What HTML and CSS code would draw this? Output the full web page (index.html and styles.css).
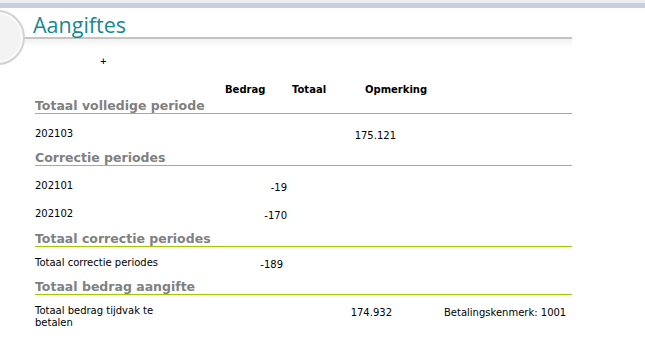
FILE: index.html
```
<!DOCTYPE html>
<html lang="nl">
<head>
<meta charset="utf-8">
<title>Aangiftes</title>
<link rel="stylesheet" href="styles.css">
</head>
<body>
<div class="topbar"></div>
<header class="masthead">
  <div class="orb"></div>
  <h1 class="title">Aangiftes</h1>
  <div class="title-shadow"></div>
</header>
<main class="report">
  <div class="mark">+</div>
  <div class="colheads"><span></span><span>Bedrag</span><span>Totaal</span><span>Opmerking</span></div>

  <section class="group">
    <h2>Totaal volledige periode</h2>
    <div class="row row-total"><span>202103</span><span class="num">175.121</span></div>
  </section>

  <section class="group">
    <h2>Correctie periodes</h2>
    <div class="row row-corr"><span>202101</span><span class="num">-19</span></div>
    <div class="row row-corr"><span>202102</span><span class="num">-170</span></div>
  </section>

  <section class="group group-sum">
    <h2>Totaal correctie periodes</h2>
    <div class="row compact row-corrsum"><span>Totaal correctie periodes</span><span class="num">-189</span></div>
  </section>

  <section class="group group-sum">
    <h2>Totaal bedrag aangifte</h2>
    <div class="row compact row-final"><span>Totaal bedrag tijdvak te betalen</span><span class="num">174.932</span><span class="note">Betalingskenmerk: 1001</span></div>
  </section>
</main>
</body>
</html>
```
FILE: styles.css
```
html, body {
  margin: 0;
  padding: 0;
  background: #ffffff;
}
body {
  font-family: "DejaVu Sans", Verdana, sans-serif;
  font-size: 10px;
  color: #000;
  overflow: hidden;
}
.topbar {
  height: 3px;
  background: #eeeeee;
  border-bottom: 5px solid #c6cee1;
}
.masthead {
  position: relative;
}
.orb {
  position: absolute;
  left: -30px;
  top: 2px;
  width: 55px;
  height: 55px;
  box-sizing: border-box;
  border-radius: 50%;
  border: 2px solid #d3d3d3;
  background: #f3f3f3;
  box-shadow: inset 0 0 0 2px #fafafa;
  z-index: 2;
}
.title {
  margin: 0 0 0 24px;
  padding: 4px 0 0 9px;
  width: 548px;
  box-sizing: border-box;
  font-family: "Open Sans", sans-serif;
  font-weight: normal;
  font-size: 21.5px;
  line-height: 25px;
  color: #16898f;
  border-bottom: 2px solid #c4c4c4;
}
.title-shadow {
  margin-left: 24px;
  width: 548px;
  height: 8px;
  background: linear-gradient(#f1f1f1, #ffffff);
}
.report {
  width: 537px;
  padding-left: 35px;
}
.mark {
  margin: 10px 0 0 65px;
  font-size: 8px;
  font-weight: bold;
  line-height: 9px;
  height: 9px;
}
.colheads {
  margin-top: 18px;
  display: grid;
  grid-template-columns: 190px 67px 73px auto;
  font-weight: bold;
  line-height: 12px;
}
.group h2 {
  margin: 8px 0 0;
  height: 14px;
  padding-bottom: 1px;
  font-size: 12.5px;
  line-height: 14px;
  font-weight: bold;
  color: #808080;
  background: linear-gradient(#9fcb00, #9fcb00) left bottom / 100% 1px no-repeat;
}
.group:first-of-type h2 {
  margin-top: 3px;
}
.group-sum h2 {
  margin-top: 9px;
}
.row {
  display: grid;
  align-items: start;
  line-height: 12px;
  padding: 14px 0 3px;
}
.row.compact {
  padding: 10px 0 2px;
}
.row .num,
.row .note {
  padding-top: 2px;
  margin-bottom: -2px;
}
.row .num {
  text-align: right;
}
.row .note {
  padding-left: 52px;
}
.row-total {
  grid-template-columns: 257px 104px;
}
.row-corr {
  grid-template-columns: 190px 62px;
}
.row-corr + .row-corr {
  padding-top: 13px;
}
.row-corrsum {
  grid-template-columns: 186px 62px;
}
.row-final {
  grid-template-columns: 140px 217px auto;
}
```
